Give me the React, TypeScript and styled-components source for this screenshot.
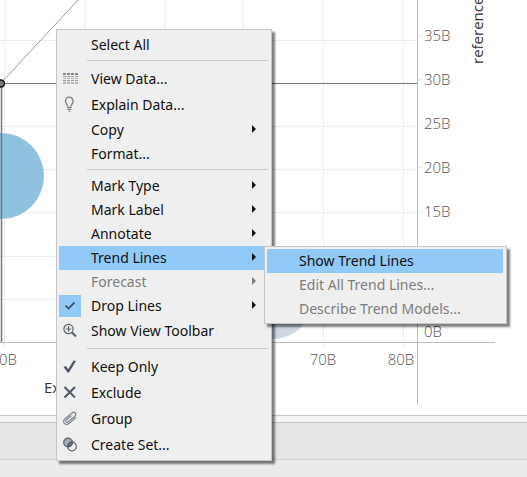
import React from "react";
import styled, { createGlobalStyle } from "styled-components";

const GlobalStyle = createGlobalStyle`
  * { box-sizing: border-box; }
  body { margin: 0; background: #ebebeb; font-family: "Noto Sans", "Open Sans", sans-serif; }
`;

const Page = styled.div`
  position: relative;
  display: flex;
  flex-direction: column;
  min-height: 100vh;
  overflow: hidden;
`;

const Chart = styled.svg`
  display: block;
  width: 100%;
  height: 415px;
  background: #fff;
`;

const Grid = styled.g`
  stroke: #ececec;
  stroke-width: 1;
`;

const Axis = styled.g`
  stroke: #bdbdbd;
  stroke-width: 1;
`;

const TickLabel = styled.text`
  font: 300 15px "Open Sans", sans-serif;
  fill: #555;
`;

const AxisTitle = styled.text`
  font: 400 15px "Open Sans", sans-serif;
  fill: #333;
`;

const Divider = styled.div`
  height: 8px;
  background: #f5f5f5;
  border-top: 1px solid #c8c8c8;
  border-bottom: 1px solid #c4c4c4;
`;

const TabBar = styled.footer`
  height: 37px;
  background: #e5e5e5;
  border-bottom: 1px solid #cecece;
`;

const Panel = styled.div`
  position: absolute;
  display: flex;
  flex-direction: column;
  background: #efefef;
  border: 1px solid #c6c6c6;
  box-shadow: 3px 3px 2px rgba(0, 0, 0, 0.5);
`;

const ContextMenu = styled(Panel)`
  left: 56px;
  top: 29px;
  width: 216px;
  padding: 3px 2px 2px;
`;

const SubMenu = styled(Panel)`
  left: 264px;
  top: 246px;
  width: 243px;
  padding: 2px 3px 2px 2px;
`;

const Item = styled.button<{ $tall?: boolean; $active?: boolean }>`
  display: flex;
  align-items: center;
  flex: none;
  height: ${(p) => (p.$tall ? 26 : 24)}px;
  padding: 0 13px 0 0;
  border: 0;
  background: ${(p) => (p.$active ? "#91c9f7" : "transparent")};
  color: #111;
  font: 400 14px/20px "Noto Sans", "Open Sans", sans-serif;
  text-align: left;
  white-space: nowrap;

  &:disabled { color: #7c7c7c; }
`;

const IconCell = styled.span<{ $checked?: boolean }>`
  display: flex;
  align-items: center;
  justify-content: center;
  flex: none;
  width: 22px;
  height: 22px;
  margin-right: 10px;
  background: ${(p) => (p.$checked ? "#91c9f7" : "transparent")};
`;

const Label = styled.span`
  flex: 1;
`;

const Arrow = styled.svg`
  flex: none;
  width: 4px;
  height: 8px;
  margin-bottom: 2px;
  fill: currentColor;
`;

const Separator = styled.hr<{ $above: number; $below: number }>`
  flex: none;
  width: auto;
  height: 1px;
  margin: ${(p) => p.$above}px 1px ${(p) => p.$below}px 28px;
  border: 0;
  background: #cccccc;
`;

const TableIcon = () => (
  <svg width="16" height="16" viewBox="0 0 16 16">
    {[1, 5, 9, 13].map((x) => (
      <g key={x}>
        <rect x={x} y="2" width="3" height="2" fill="#858a92" />
        <rect x={x} y="5" width="3" height="1" fill="#9a9ea5" />
        <rect x={x} y="7" width="3" height="1" fill="#b3b6bb" />
        <rect x={x} y="9" width="3" height="1" fill="#9a9ea5" />
        <rect x={x} y="11" width="3" height="1" fill="#b3b6bb" />
        <rect x={x} y="12" width="3" height="1" fill="#b3b6bb" />
      </g>
    ))}
  </svg>
);

const BulbIcon = () => (
  <svg width="16" height="18" viewBox="0 0 16 18" fill="none" stroke="#7b7e83" strokeWidth="1.3">
    <path d="M5.500 10.500C5.500 8.500 3.500 7.500 3.500 5a3.800 3.800 0 0 1 7.600 0c0 2.500-2 3.500-2 5.500" />
    <path d="M5 11.300h4.600M5.300 13.300h4M6.500 15.200h1.800" />
  </svg>
);

const SmallCheckIcon = () => (
  <svg width="16" height="16" viewBox="0 0 16 16" fill="none" stroke="#34495e" strokeWidth="1.7">
    <path d="M3.500 7.500 6.500 10.500 12.500 4.500" />
  </svg>
);

const ZoomIcon = () => (
  <svg width="16" height="16" viewBox="0 0 16 16" fill="none" stroke="#59616c" strokeWidth="1.2">
    <circle cx="6.500" cy="6" r="4.600" />
    <path d="M6.500 3.300v5.400M3.800 6h5.400" />
    <path d="m10 9.500 4 4" strokeWidth="2.200" />
  </svg>
);

const CheckIcon = () => (
  <svg width="16" height="16" viewBox="0 0 16 16" fill="#4d5968">
    <path d="M1.500 8 4 7l2.200 3.200L11.500 1.500 14 2 7 13.500H5.500Z" />
  </svg>
);

const CrossIcon = () => (
  <svg width="16" height="16" viewBox="0 0 16 16" fill="none" stroke="#4d5968" strokeWidth="2">
    <path d="m2.500 2 10.500 10.500M13 2 2.500 12.500" />
  </svg>
);

const ClipIcon = () => (
  <svg width="16" height="16" viewBox="0 0 16 16" fill="none" stroke="#7c838d" strokeWidth="1.2">
    <path d="m9.500 4.500-5 4.300c-1.500 1.500.2 3.200 1.700 2l6.600-5.600c2.600-2.400-.2-5.400-2.900-3.300L3 7.800c-3.600 3.200.5 7.600 4.200 4.500l6.800-5.800" />
  </svg>
);

const SetIcon = () => (
  <svg width="16" height="16" viewBox="0 0 16 16" stroke="#59616c" strokeWidth="1.200">
    <circle cx="6" cy="5.500" r="4.300" fill="#a6adb7" />
    <circle cx="10" cy="9.500" r="4.300" fill="none" />
    <path d="M5.700 9.800A4.300 4.300 0 0 1 10.300 5.200 4.300 4.300 0 0 1 5.700 9.800Z" fill="#647080" />
  </svg>
);

type MenuItemProps = {
  label: string;
  icon?: React.ReactNode;
  tall?: boolean;
  arrow?: boolean;
  active?: boolean;
  disabled?: boolean;
  checked?: boolean;
};

const MenuItem = ({ label, icon, tall, arrow, active, disabled, checked }: MenuItemProps) => (
  <Item
    type="button"
    role={checked ? "menuitemcheckbox" : "menuitem"}
    aria-checked={checked}
    aria-haspopup={arrow ? "menu" : undefined}
    disabled={disabled}
    $tall={tall}
    $active={active}
  >
    <IconCell $checked={checked}>{icon}</IconCell>
    <Label>{label}</Label>
    {arrow && (
      <Arrow viewBox="0 0 4 8">
        <path d="M0 0 4 4 0 8Z" />
      </Arrow>
    )}
  </Item>
);

const columns = [4, 84, 164, 243, 323, 403];
const rows = [40, 83, 126, 169, 212, 256, 299];
const ticks = [
  { label: "35B", y: 35 },
  { label: "30B", y: 79 },
  { label: "25B", y: 123 },
  { label: "20B", y: 167 },
  { label: "15B", y: 211 },
  { label: "0B", y: 331 },
];

export default function App() {
  return (
    <>
      <GlobalStyle />
      <Page>
        <Chart role="img" aria-label="Scatter plot">
          <Grid>
            {columns.map((x) => (
              <line key={x} x1={x + 0.5} x2={x + 0.5} y1="0" y2="346" />
            ))}
            {rows.map((y) => (
              <line key={y} x1="0" x2="417" y1={y + 0.5} y2={y + 0.5} />
            ))}
            {ticks.map((t) => (
              <line key={t.label} x1="418" x2="422" y1={t.y + 0.5} y2={t.y + 0.5} />
            ))}
          </Grid>
          <circle cx="1" cy="176" r="43" fill="#8fc2df" />
          <circle cx="274" cy="301" r="38" fill="#cfd8e2" />
          <path d="M1.500 83V342" stroke="#777" strokeWidth="1.500" />
          <path d="M1 83.500H417" stroke="#777" strokeWidth="1.200" />
          <path d="M1 83 78 0" stroke="#999" />
          <circle cx="1" cy="83.500" r="3.500" fill="#777" stroke="#111" strokeWidth="1.500" />
          <Axis>
            <path d="M0 342.500H495M417.500 0V405" />
          </Axis>
          {ticks.map((t) => (
            <TickLabel key={t.label} x="424" y={t.y + 6}>
              {t.label}
            </TickLabel>
          ))}
          <TickLabel x="-1" y="365">0B</TickLabel>
          <TickLabel x="323" y="365" textAnchor="middle">70B</TickLabel>
          <TickLabel x="401" y="365" textAnchor="middle">80B</TickLabel>
          <AxisTitle x="44" y="393">Ex</AxisTitle>
          <AxisTitle transform="translate(483 64) rotate(-90)">reference</AxisTitle>
        </Chart>
        <Divider />
        <TabBar />

        <ContextMenu role="menu">
          <MenuItem label="Select All" />
          <Separator $above={3} $below={5} />
          <MenuItem label="View Data..." icon={<TableIcon />} tall />
          <MenuItem label="Explain Data..." icon={<BulbIcon />} tall />
          <MenuItem label="Copy" arrow />
          <MenuItem label="Format..." />
          <Separator $above={3} $below={4} />
          <MenuItem label="Mark Type" arrow />
          <MenuItem label="Mark Label" arrow />
          <MenuItem label="Annotate" arrow />
          <MenuItem label="Trend Lines" arrow active />
          <MenuItem label="Forecast" arrow disabled />
          <MenuItem label="Drop Lines" arrow checked icon={<SmallCheckIcon />} />
          <MenuItem label="Show View Toolbar" icon={<ZoomIcon />} tall />
          <Separator $above={4} $below={5} />
          <MenuItem label="Keep Only" icon={<CheckIcon />} tall />
          <MenuItem label="Exclude" icon={<CrossIcon />} tall />
          <MenuItem label="Group" icon={<ClipIcon />} tall />
          <MenuItem label="Create Set..." icon={<SetIcon />} tall />
        </ContextMenu>

        <SubMenu role="menu">
          <MenuItem label="Show Trend Lines" active />
          <MenuItem label="Edit All Trend Lines..." disabled />
          <MenuItem label="Describe Trend Models..." disabled />
        </SubMenu>
      </Page>
    </>
  );
}
